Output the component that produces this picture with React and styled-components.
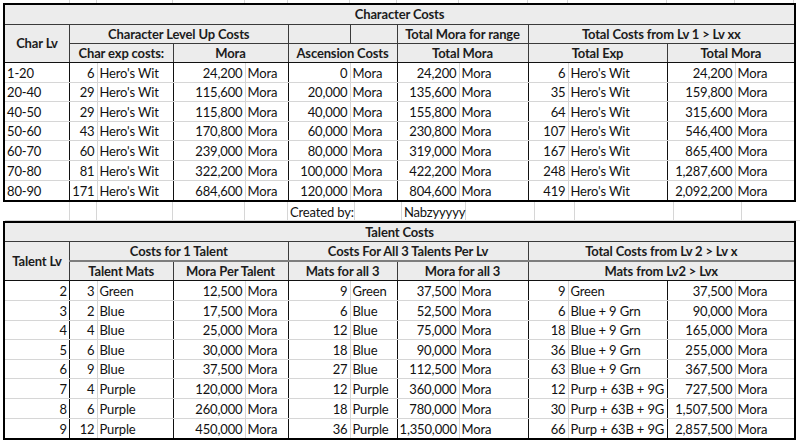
import styled, { createGlobalStyle } from 'styled-components';

const GlobalStyle = createGlobalStyle`
    html, body {
        margin: 0;
        padding: 0;
        background: #fff;
    }
    body {
        font-family: Lato, "Open Sans", "Liberation Sans", sans-serif;
        color: #111;
    }
`;

// column widths in px, measured from the sheet
const COLS = [64.5, 27.5, 76, 72, 43, 62, 47, 62, 69, 40, 99, 68, 59];
// dark group borders sit after these column indexes
const DARK_AFTER = [0, 2, 4, 6, 8, 10];

const GRID = '#d6d6d6';
const HEAD_BG = '#ececec';

const Page = styled.div`
    width: 800px;
    height: 441px;
    overflow: hidden;
    display: flex;
    flex-direction: column;
`;

const Strip = styled.div`
    height: ${(p) => p.$h}px;
    margin-left: 5px;
    display: flex;
`;

const StripCell = styled.div`
    flex: 0 0 ${(p) => p.$w}px;
    box-sizing: border-box;
    border-right: 1px solid ${GRID};
    border-bottom: ${(p) => (p.$bottom ? `1px solid ${GRID}` : 'none')};
    font-size: 13px;
    letter-spacing: -0.15px;
    line-height: 20px;
    padding-left: 2px;
    white-space: nowrap;
    overflow: visible;
`;

const Frame = styled.div`
    margin-left: 3px;
    width: 793px;
    box-sizing: border-box;
    border: 2px solid #000;
`;

const Table = styled.table`
    width: 789px;
    border-collapse: collapse;
    table-layout: fixed;
    font-size: 13px;
    letter-spacing: -0.15px;
`;

const Row = styled.tr`
    height: ${(p) => p.$h || 19.6}px;
`;

const Cell = styled.td`
    padding: 0 2px;
    white-space: nowrap;
    overflow: hidden;
    text-align: ${(p) => p.$align || 'left'};
    border-bottom: 1px solid ${(p) => p.$bottom || GRID};
    border-right: 1px solid ${(p) => (p.$dark ? '#111' : GRID)};
    line-height: 18px;
    vertical-align: bottom;
    &:last-child {
        border-right: none;
    }
    tr:last-child > & {
        border-bottom: none;
    }
`;

const Head = styled.td`
    padding: 0 2px;
    white-space: nowrap;
    overflow: hidden;
    font-weight: 700;
    text-align: center;
    background: ${HEAD_BG};
    color: #1c1c1c;
    border-bottom: ${(p) => p.$bottom || '1px solid #3a3a3a'};
    border-right: 1px solid #3a3a3a;
    line-height: 18px;
    &:last-child {
        border-right: none;
    }
`;

const charRows = [
    ['1-20', 6, '24,200', '0', '24,200', 6, '24,200'],
    ['20-40', 29, '115,600', '20,000', '135,600', 35, '159,800'],
    ['40-50', 29, '115,800', '40,000', '155,800', 64, '315,600'],
    ['50-60', 43, '170,800', '60,000', '230,800', 107, '546,400'],
    ['60-70', 60, '239,000', '80,000', '319,000', 167, '865,400'],
    ['70-80', 81, '322,200', '100,000', '422,200', 248, '1,287,600'],
    ['80-90', 171, '684,600', '120,000', '804,600', 419, '2,092,200'],
];

const talentRows = [
    [2, 3, 'Green', '12,500', 9, 'Green', '37,500', 9, 'Green', '37,500'],
    [3, 2, 'Blue', '17,500', 6, 'Blue', '52,500', 6, 'Blue + 9 Grn', '90,000'],
    [4, 4, 'Blue', '25,000', 12, 'Blue', '75,000', 18, 'Blue + 9 Grn', '165,000'],
    [5, 6, 'Blue', '30,000', 18, 'Blue', '90,000', 36, 'Blue + 9 Grn', '255,000'],
    [6, 9, 'Blue', '37,500', 27, 'Blue', '112,500', 63, 'Blue + 9 Grn', '367,500'],
    [7, 4, 'Purple', '120,000', 12, 'Purple', '360,000', 12, 'Purp + 63B + 9G', '727,500'],
    [8, 6, 'Purple', '260,000', 18, 'Purple', '780,000', 30, 'Purp + 63B + 9G', '1,507,500'],
    [9, 12, 'Purple', '450,000', 36, 'Purple', '1,350,000', 66, 'Purp + 63B + 9G', '2,857,500'],
];

const Cols = () => (
    <colgroup>
        {COLS.map((w, i) => (
            <col key={i} style={{ width: w }} />
        ))}
    </colgroup>
);

// turns a list of 13 values into cells, numbers right / units left
const DataCells = ({ values, firstAlign }) =>
    values.map((v, i) => {
        const align = i === 0 ? firstAlign : i % 2 === 1 ? 'right' : 'left';
        return (
            <Cell key={i} $align={align} $dark={DARK_AFTER.includes(i)}>
                {v}
            </Cell>
        );
    });

const CharacterCosts = () => (
    <Frame>
        <Table>
            <Cols />
            <tbody>
                <Row $h={19}>
                    <Head colSpan={13}>Character Costs</Head>
                </Row>
                <Row $h={19}>
                    <Head rowSpan={2} $bottom="1px solid #111">Char Lv</Head>
                    <Head colSpan={4}>Character Level Up Costs</Head>
                    <Head></Head>
                    <Head></Head>
                    <Head colSpan={2}>Total Mora for range</Head>
                    <Head colSpan={4}>Total Costs from Lv 1 &gt; Lv xx</Head>
                </Row>
                <Row $h={19.6}>
                    <Head colSpan={2} $bottom="1px solid #111">Char exp costs:</Head>
                    <Head colSpan={2} $bottom="1px solid #111">Mora</Head>
                    <Head colSpan={2} $bottom="1px solid #111">Ascension Costs</Head>
                    <Head colSpan={2} $bottom="1px solid #111">Total Mora</Head>
                    <Head colSpan={2} $bottom="1px solid #111">Total Exp</Head>
                    <Head colSpan={2} $bottom="1px solid #111">Total Mora</Head>
                </Row>
                {charRows.map((r) => (
                    <Row key={r[0]}>
                        <DataCells
                            firstAlign="left"
                            values={[
                                r[0],
                                r[1],
                                "Hero's Wit",
                                r[2],
                                'Mora',
                                r[3],
                                'Mora',
                                r[4],
                                'Mora',
                                r[5],
                                "Hero's Wit",
                                r[6],
                                'Mora',
                            ]}
                        />
                    </Row>
                ))}
            </tbody>
        </Table>
    </Frame>
);

const TalentCosts = () => (
    <Frame>
        <Table>
            <Cols />
            <tbody>
                <Row $h={19}>
                    <Head colSpan={13}>Talent Costs</Head>
                </Row>
                <Row $h={19}>
                    <Head rowSpan={2} $bottom="1px solid #111">Talent Lv</Head>
                    <Head colSpan={4} $bottom="2px solid #7d7d7d">Costs for 1 Talent</Head>
                    <Head colSpan={4} $bottom="2px solid #7d7d7d">Costs For All 3 Talents Per Lv</Head>
                    <Head colSpan={4} $bottom="2px solid #7d7d7d">Total Costs from Lv 2 &gt; Lv x</Head>
                </Row>
                <Row $h={19.6}>
                    <Head colSpan={2} $bottom="1px solid #111">Talent Mats</Head>
                    <Head colSpan={2} $bottom="1px solid #111">Mora Per Talent</Head>
                    <Head colSpan={2} $bottom="1px solid #111">Mats for all 3</Head>
                    <Head colSpan={2} $bottom="1px solid #111">Mora for all 3</Head>
                    <Head colSpan={4} $bottom="1px solid #111">Mats from Lv2 &gt; Lvx</Head>
                </Row>
                {talentRows.map((r) => (
                    <Row key={r[0]}>
                        <DataCells
                            firstAlign="right"
                            values={[
                                r[0],
                                r[1],
                                r[2],
                                r[3],
                                'Mora',
                                r[4],
                                r[5],
                                r[6],
                                'Mora',
                                r[7],
                                r[8],
                                r[9],
                                'Mora',
                            ]}
                        />
                    </Row>
                ))}
            </tbody>
        </Table>
    </Frame>
);

const App = () => (
    <Page>
        <GlobalStyle />
        <Strip $h={3}>
            {COLS.map((w, i) => (
                <StripCell key={i} $w={w} />
            ))}
        </Strip>
        <CharacterCosts />
        <Strip $h={19}>
            {COLS.map((w, i) => (
                <StripCell key={i} $w={w} $bottom>
                    {i === 5 ? 'Created by:' : i === 7 ? 'Nabzyyyyy' : ''}
                </StripCell>
            ))}
        </Strip>
        <TalentCosts />
    </Page>
);

export default App;
